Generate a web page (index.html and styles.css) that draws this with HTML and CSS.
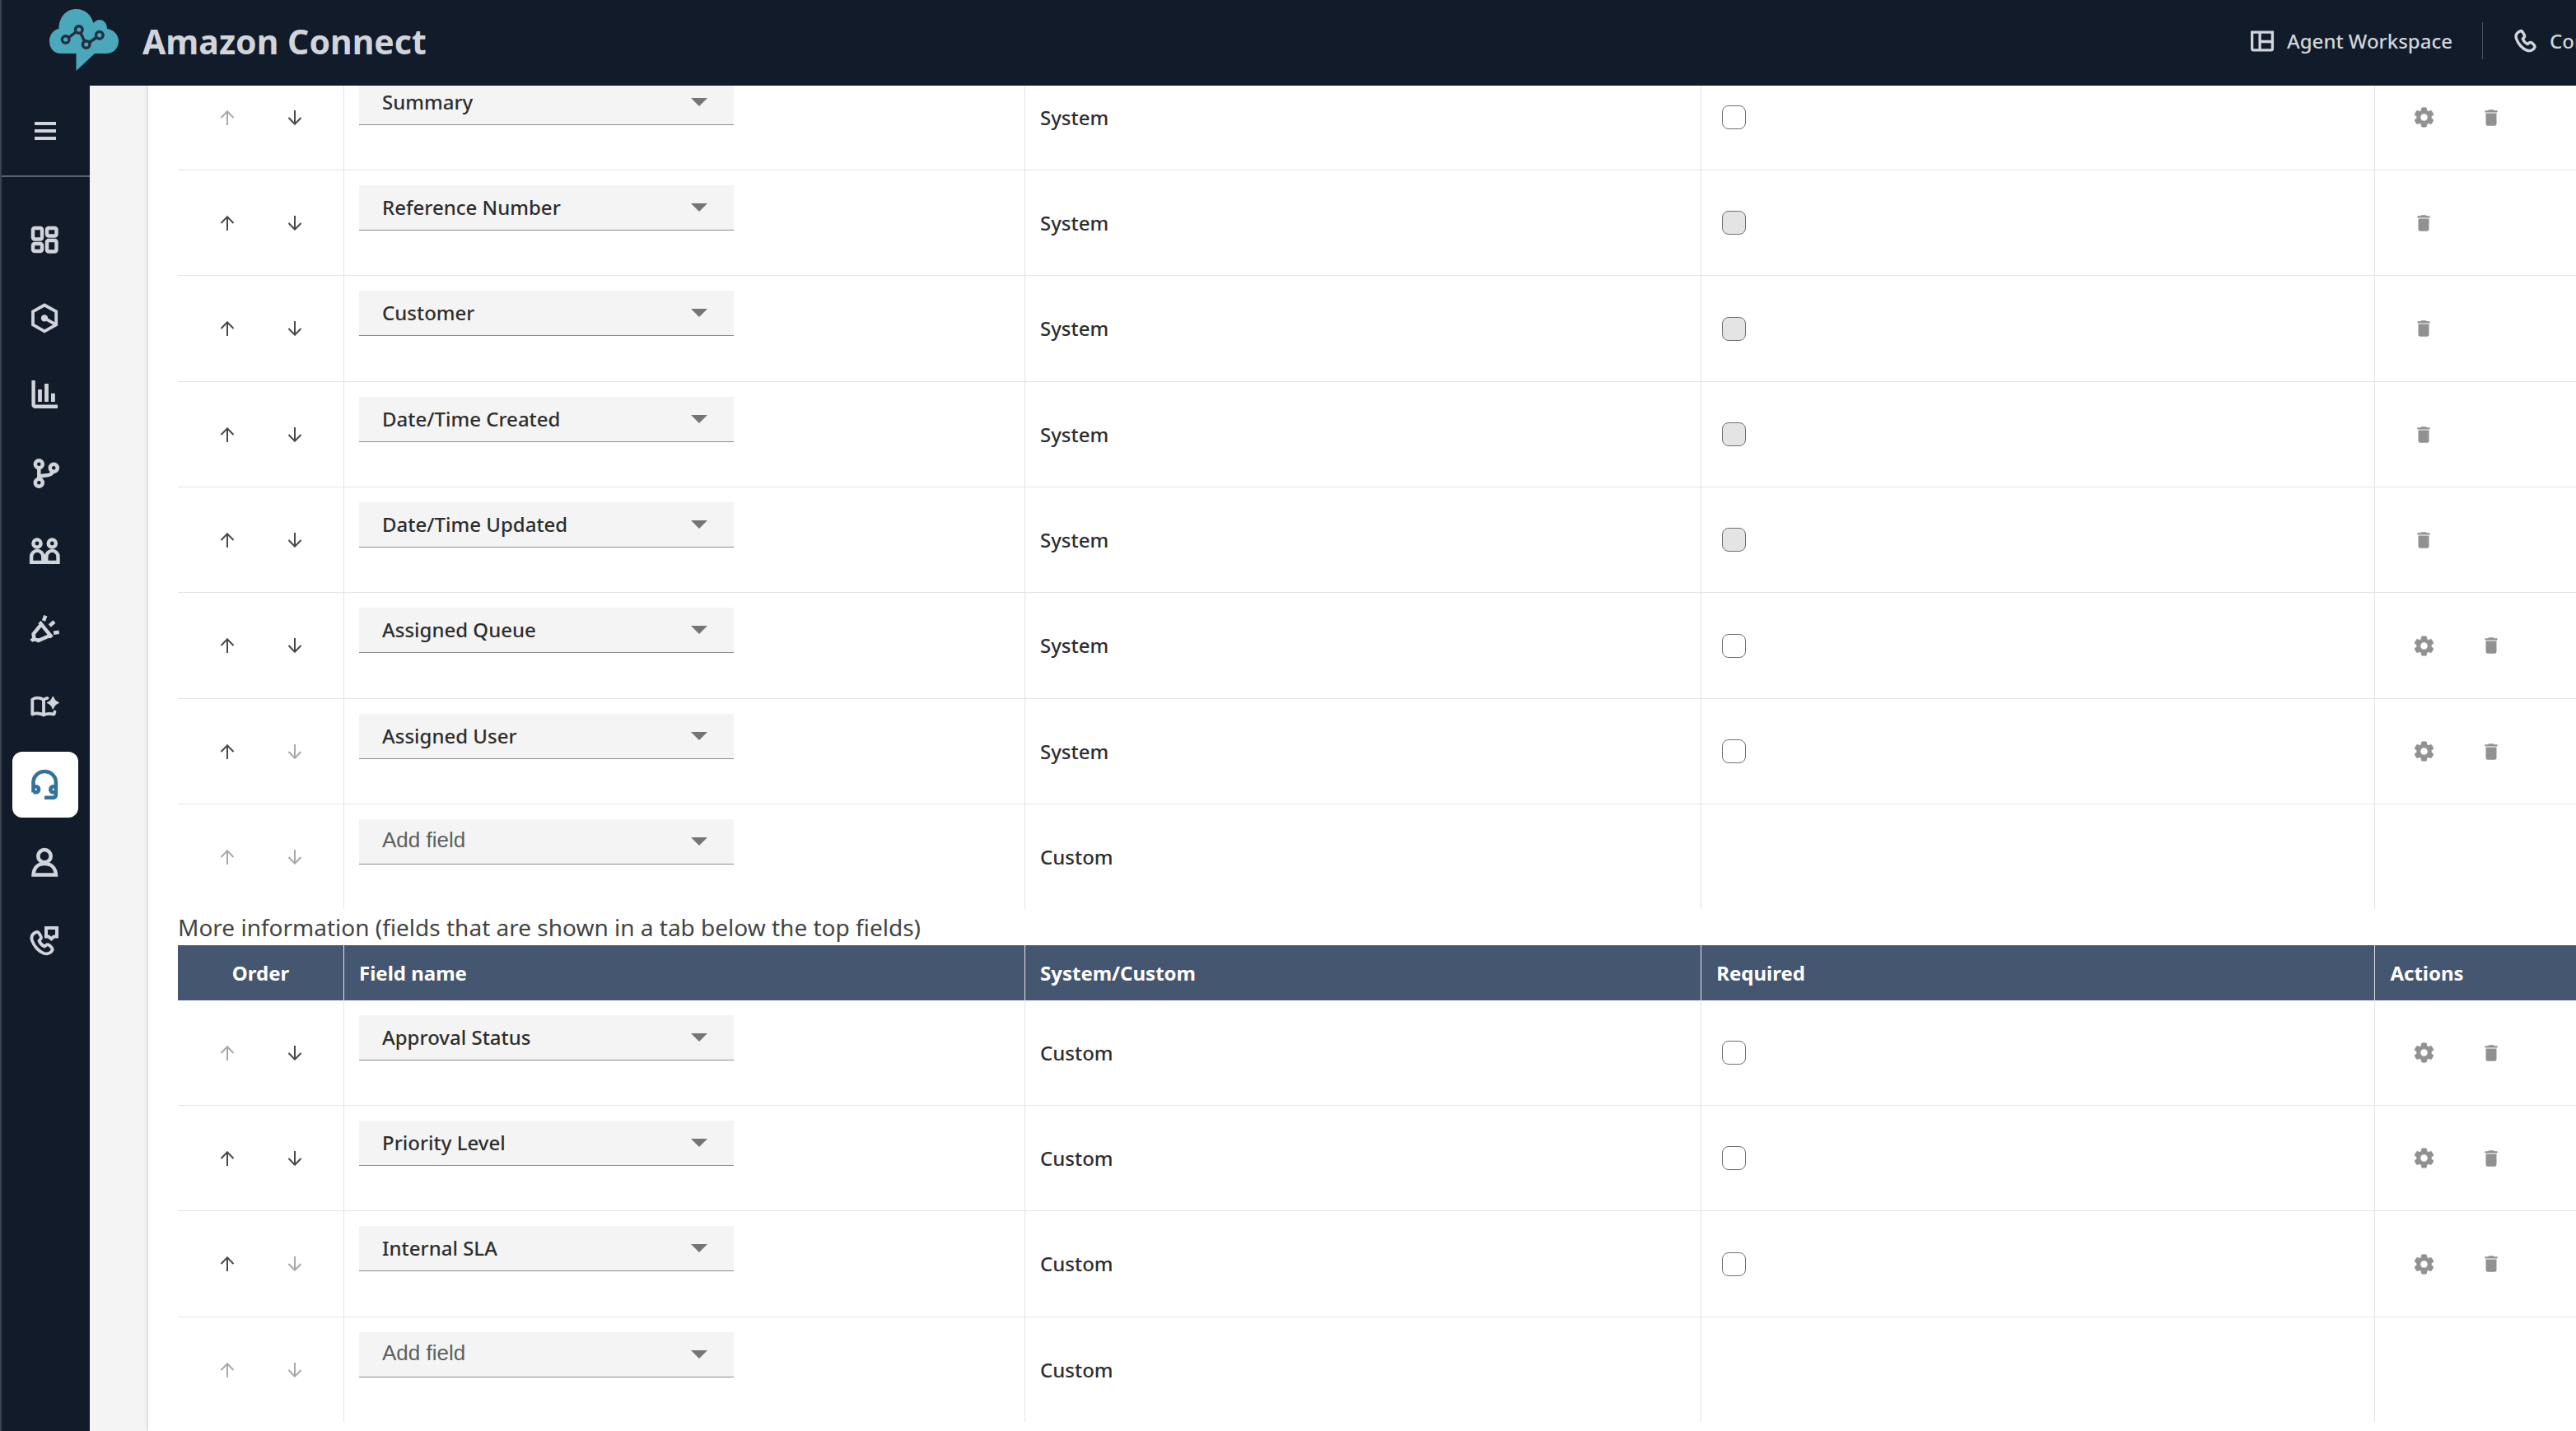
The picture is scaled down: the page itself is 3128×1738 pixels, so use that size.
FILE: index.html
```html
<!DOCTYPE html>
<html lang="en">
<head>
<meta charset="utf-8">
<title>Amazon Connect</title>
<link rel="stylesheet" href="styles.css">
</head>
<body>
<svg class="sprite" aria-hidden="true">
  <symbol id="up" viewBox="0 0 18 18"><path d="M9 18V2M1.500 9L9 1.300L16.500 9" fill="none" stroke="currentColor" stroke-width="2"/></symbol>
  <symbol id="down" viewBox="0 0 18 18"><path d="M9 0V16M1.500 9L9 16.700L16.500 9" fill="none" stroke="currentColor" stroke-width="2"/></symbol>
  <symbol id="caret" viewBox="0 0 20 10"><path d="M0 0H20L10 10Z" fill="currentColor"/></symbol>
  <symbol id="gear" viewBox="0 0 24 24"><path fill="currentColor" stroke="currentColor" stroke-width=".8" d="M19.140 12.940c.04-.3.06-.61.06-.94 0-.32-.02-.64-.07-.94l2.030-1.580c.18-.14.23-.41.12-.61l-1.920-3.320c-.12-.22-.37-.29-.59-.22l-2.390.96c-.5-.38-1.030-.7-1.620-.94l-.36-2.540c-.04-.24-.24-.41-.48-.41h-3.840c-.24 0-.43.17-.47.41l-.36 2.540c-.59.24-1.130.57-1.620.94l-2.390-.96c-.22-.08-.47 0-.59.22L2.740 8.870c-.12.21-.08.47.12.61l2.030 1.580c-.05.3-.09.63-.09.94s.02.64.07.94l-2.030 1.580c-.18.14-.23.41-.12.61l1.920 3.320c.12.22.37.29.59.22l2.390-.96c.5.38 1.030.7 1.620.94l.36 2.540c.05.24.24.41.48.41h3.840c.24 0 .44-.17.47-.41l.36-2.540c.59-.24 1.130-.56 1.620-.94l2.390.96c.22.08.47 0 .59-.22l1.920-3.320c.12-.22.07-.47-.12-.61l-2.010-1.580zM12 15.900c-2.150 0-3.900-1.750-3.900-3.900s1.750-3.900 3.900-3.900 3.900 1.750 3.900 3.900-1.750 3.900-3.900 3.900z"/></symbol>
  <symbol id="trash" viewBox="0 0 24 24"><path fill="currentColor" d="M6 19c0 1.100.9 2 2 2h8c1.100 0 2-.9 2-2V7H6v12zM19 4h-3.500l-1-1h-5l-1 1H5v2h14V4z"/></symbol>
  <symbol id="handset" viewBox="0 7 32 32"><path fill="none" stroke="currentColor" stroke-width="3.800" stroke-linejoin="round" d="M8 10.500c-4 2-5.500 5.500-4 10c2.500 7 8.500 13.500 14.500 15.500c4 1 8-.5 9.700-3.500c.8-1.500.3-3-.9-4.200l-2-2c-1.400-1.300-3-1.300-4.300-.3l-2 1.500c-3-1.300-5.400-4-6.500-7l1.500-1.600c1.300-1.300 1.200-2.600.4-4l-2-3.500c-1-1.600-2.800-1.800-4.400-.9Z"/></symbol>
</svg>

<header class="topbar">
  <a class="brand" href="#">
    <svg class="logo" viewBox="0 0 84 75" aria-hidden="true">
      <path fill="#4ba7ba" d="M11.500 24C11.500 10 20 0 32.500 0C43 0 51 7 53.500 17C55 15 58 13 61 13C66 13 70 17 70 24C78 25 84 31 84 39C84 48 77 54 69 54H55L32.500 75V54H14C6 54 0 48 0 39C0 31 5 25 11.500 24Z"/>
      <g fill="none" stroke="#232f3e" stroke-width="3.400">
        <path d="M23.500 34.500L32 28M38 29L42.500 39M48.500 40.500L57 34.500"/>
        <circle cx="19.700" cy="37" r="4.300"/><circle cx="35.800" cy="25" r="4.300"/><circle cx="44.700" cy="43" r="4.300"/><circle cx="60.800" cy="31.700" r="4.300"/>
      </g>
    </svg>
    <span class="brand-name">Amazon Connect</span>
  </a>
  <nav class="top-links" aria-label="Tools">
    <a class="top-link" href="#">
      <svg class="icon-workspace" viewBox="0 0 30 26" aria-hidden="true"><path fill="none" stroke="currentColor" stroke-width="3.400" d="M1.700 1.700H27.300V22.300a2 2 0 0 1-2 2H3.700a2 2 0 0 1-2-2ZM11.500 2V24M12 13.500H27"/></svg>
      Agent Workspace
    </a>
    <a class="top-link top-link-divided" href="#">
      <svg class="icon-call" aria-hidden="true"><use href="#handset"/></svg>
      Contact Control Panel
    </a>
  </nav>
</header>

<div class="shell">
  <aside class="rail">
    <button class="menu-toggle" aria-label="Menu"><svg class="icon-menu" viewBox="0 0 26 24" aria-hidden="true"><path stroke="currentColor" stroke-width="4" d="M0 3H26M0 12H26M0 21H26"/></svg></button>
    <nav class="rail-nav" aria-label="Main">
      <a class="rail-link" href="#" aria-label="Dashboard"><svg viewBox="0 0 40 40"><g stroke-width="4.400"><rect x="5" y="6" width="11" height="13.500" rx="2"/><rect x="22" y="6" width="11.500" height="9.500" rx="2"/><rect x="5" y="25" width="11" height="9" rx="2"/><rect x="22" y="21" width="11.500" height="13.500" rx="2"/></g></svg></a>
      <a class="rail-link" href="#" aria-label="Routing"><svg viewBox="0 0 40 40"><path stroke-width="3.800" d="M19 4.500L33.200 12.300V28.300L19 36.300L5 28.300V12.300ZM19 20.400L33 28.300"/><circle cx="19" cy="20.400" r="4.200" fill="currentColor" stroke="none"/></svg></a>
      <a class="rail-link" href="#" aria-label="Analytics"><svg viewBox="0 0 40 40"><path stroke-width="4.400" d="M5.600 2V31.600a2.200 2.200 0 0 0 2.200 2.200H35"/><path stroke-width="4.800" d="M13.500 13V28M21.500 6V28M29.400 17.700V28"/></svg></a>
      <a class="rail-link" href="#" aria-label="Flows"><svg viewBox="0 0 40 40"><g stroke-width="4.500"><circle cx="12.300" cy="8.700" r="4.500"/><circle cx="12.300" cy="31.300" r="4.500"/><circle cx="30.300" cy="13.300" r="4.500"/><path d="M12.300 13V27C12.300 22 18 22.700 22 22.300S28.500 20 29.500 17.500"/></g></svg></a>
      <a class="rail-link" href="#" aria-label="Users"><svg viewBox="0 0 40 40"><g stroke-width="4.400"><circle cx="10" cy="11" r="4.600"/><circle cx="28.300" cy="11" r="4.600"/><path d="M3.100 33.900V27a7 7 0 0 1 14.200 0V33.900ZM21.300 33.900V27a7 7 0 0 1 14.200 0V33.900Z"/></g></svg></a>
      <a class="rail-link" href="#" aria-label="Campaigns"><svg viewBox="0 0 40 40"><path stroke-width="4.400" d="M13 11.500L28 30M15 14.500L5.500 26L6.500 31.500L11.500 34L26 27.700M6.500 31L3 34.500M20.300 3.700L18 10M31 11L25.300 16M36.700 23.700L30 24.700"/></svg></a>
      <a class="rail-link" href="#" aria-label="Knowledge"><svg viewBox="0 0 40 40"><path stroke-width="3.800" stroke-linejoin="round" stroke-linecap="round" d="M18 30.500V12C14 9 8 9 4.300 11.500V29.500C8 28 14 28 18 30.500C22 28 26 28.500 30.500 29.500L31.500 26.500M18 12C19.500 10.500 21 10 22.500 9.800"/><path fill="currentColor" stroke-width="1.600" stroke-linejoin="round" d="M29.300 8.500Q30.800 13.800 36 15.500Q30.800 17.200 29.300 22.500Q27.800 17.200 22.700 15.500Q27.800 13.800 29.300 8.500Z"/></svg></a>
      <a class="rail-link rail-link-active" href="#" aria-label="Agent applications" aria-current="page"><svg viewBox="0 0 40 40"><path stroke-width="4.600" d="M5.500 29.500V17a13.700 13 0 0 1 27.400 0V32.500a3.300 3.300 0 0 1-3.300 3.300H19M5.500 22.300H9a3 3 0 0 1 3 3v1a3 3 0 0 1-3 3H5.500M32.900 22.300H29.400a3 3 0 0 0-3 3v1a3 3 0 0 0 3 3H32.900"/></svg></a>
      <a class="rail-link" href="#" aria-label="Customer profiles"><svg viewBox="0 0 40 40"><g stroke-width="4.600"><circle cx="19" cy="12.700" r="7.700"/><path d="M5.600 35.500C6 27 11 22 19 22S32.500 27 32.900 35.500Z"/></g></svg></a>
      <a class="rail-link" href="#" aria-label="Channels"><svg viewBox="0 0 40 40"><path stroke-width="4" d="M21 5H34V15.500H30.500L27.300 18.300L24 15.500H21Z"/><use href="#handset" x="0" y="7" width="32" height="32"/></svg></a>
    </nav>
  </aside>

  <main class="content">
    <div class="card">
      <table class="fields fields-scrolled" aria-label="Top fields">
        <colgroup><col class="col-order"><col class="col-name"><col class="col-type"><col class="col-required"><col></colgroup>
        <tbody>
          <tr>
            <td><div class="order"><button aria-label="Move up" disabled><svg><use href="#up"/></svg></button><button aria-label="Move down"><svg><use href="#down"/></svg></button></div></td>
            <td><div class="picker"><select aria-label="Field"><option>Summary</option></select><svg><use href="#caret"/></svg></div></td>
            <td>System</td><td><input type="checkbox" aria-label="Required"></td>
            <td><div class="actions"><button aria-label="Settings"><svg class="gear"><use href="#gear"/></svg></button><button aria-label="Delete"><svg class="trash"><use href="#trash"/></svg></button></div></td>
          </tr>
          <tr>
            <td><div class="order"><button aria-label="Move up"><svg><use href="#up"/></svg></button><button aria-label="Move down"><svg><use href="#down"/></svg></button></div></td>
            <td><div class="picker"><select aria-label="Field"><option>Reference Number</option></select><svg><use href="#caret"/></svg></div></td>
            <td>System</td><td><input type="checkbox" aria-label="Required" disabled></td>
            <td><div class="actions"><button aria-label="Delete"><svg class="trash"><use href="#trash"/></svg></button></div></td>
          </tr>
          <tr>
            <td><div class="order"><button aria-label="Move up"><svg><use href="#up"/></svg></button><button aria-label="Move down"><svg><use href="#down"/></svg></button></div></td>
            <td><div class="picker"><select aria-label="Field"><option>Customer</option></select><svg><use href="#caret"/></svg></div></td>
            <td>System</td><td><input type="checkbox" aria-label="Required" disabled></td>
            <td><div class="actions"><button aria-label="Delete"><svg class="trash"><use href="#trash"/></svg></button></div></td>
          </tr>
          <tr>
            <td><div class="order"><button aria-label="Move up"><svg><use href="#up"/></svg></button><button aria-label="Move down"><svg><use href="#down"/></svg></button></div></td>
            <td><div class="picker"><select aria-label="Field"><option>Date/Time Created</option></select><svg><use href="#caret"/></svg></div></td>
            <td>System</td><td><input type="checkbox" aria-label="Required" disabled></td>
            <td><div class="actions"><button aria-label="Delete"><svg class="trash"><use href="#trash"/></svg></button></div></td>
          </tr>
          <tr>
            <td><div class="order"><button aria-label="Move up"><svg><use href="#up"/></svg></button><button aria-label="Move down"><svg><use href="#down"/></svg></button></div></td>
            <td><div class="picker"><select aria-label="Field"><option>Date/Time Updated</option></select><svg><use href="#caret"/></svg></div></td>
            <td>System</td><td><input type="checkbox" aria-label="Required" disabled></td>
            <td><div class="actions"><button aria-label="Delete"><svg class="trash"><use href="#trash"/></svg></button></div></td>
          </tr>
          <tr>
            <td><div class="order"><button aria-label="Move up"><svg><use href="#up"/></svg></button><button aria-label="Move down"><svg><use href="#down"/></svg></button></div></td>
            <td><div class="picker"><select aria-label="Field"><option>Assigned Queue</option></select><svg><use href="#caret"/></svg></div></td>
            <td>System</td><td><input type="checkbox" aria-label="Required"></td>
            <td><div class="actions"><button aria-label="Settings"><svg class="gear"><use href="#gear"/></svg></button><button aria-label="Delete"><svg class="trash"><use href="#trash"/></svg></button></div></td>
          </tr>
          <tr>
            <td><div class="order"><button aria-label="Move up"><svg><use href="#up"/></svg></button><button aria-label="Move down" disabled><svg><use href="#down"/></svg></button></div></td>
            <td><div class="picker"><select aria-label="Field"><option>Assigned User</option></select><svg><use href="#caret"/></svg></div></td>
            <td>System</td><td><input type="checkbox" aria-label="Required"></td>
            <td><div class="actions"><button aria-label="Settings"><svg class="gear"><use href="#gear"/></svg></button><button aria-label="Delete"><svg class="trash"><use href="#trash"/></svg></button></div></td>
          </tr>
          <tr>
            <td><div class="order"><button aria-label="Move up" disabled><svg><use href="#up"/></svg></button><button aria-label="Move down" disabled><svg><use href="#down"/></svg></button></div></td>
            <td><div class="picker picker-empty"><select aria-label="Field"><option>Add field</option></select><svg><use href="#caret"/></svg></div></td>
            <td>Custom</td><td></td><td></td>
          </tr>
        </tbody>
      </table>

      <h2 class="section-title">More information (fields that are shown in a tab below the top fields)</h2>
      <table class="fields" aria-label="More information fields">
        <colgroup><col class="col-order"><col class="col-name"><col class="col-type"><col class="col-required"><col></colgroup>
        <thead>
          <tr><th scope="col">Order</th><th scope="col">Field name</th><th scope="col">System/Custom</th><th scope="col">Required</th><th scope="col">Actions</th></tr>
        </thead>
        <tbody>
          <tr>
            <td><div class="order"><button aria-label="Move up" disabled><svg><use href="#up"/></svg></button><button aria-label="Move down"><svg><use href="#down"/></svg></button></div></td>
            <td><div class="picker"><select aria-label="Field"><option>Approval Status</option></select><svg><use href="#caret"/></svg></div></td>
            <td>Custom</td><td><input type="checkbox" aria-label="Required"></td>
            <td><div class="actions"><button aria-label="Settings"><svg class="gear"><use href="#gear"/></svg></button><button aria-label="Delete"><svg class="trash"><use href="#trash"/></svg></button></div></td>
          </tr>
          <tr>
            <td><div class="order"><button aria-label="Move up"><svg><use href="#up"/></svg></button><button aria-label="Move down"><svg><use href="#down"/></svg></button></div></td>
            <td><div class="picker"><select aria-label="Field"><option>Priority Level</option></select><svg><use href="#caret"/></svg></div></td>
            <td>Custom</td><td><input type="checkbox" aria-label="Required"></td>
            <td><div class="actions"><button aria-label="Settings"><svg class="gear"><use href="#gear"/></svg></button><button aria-label="Delete"><svg class="trash"><use href="#trash"/></svg></button></div></td>
          </tr>
          <tr>
            <td><div class="order"><button aria-label="Move up"><svg><use href="#up"/></svg></button><button aria-label="Move down" disabled><svg><use href="#down"/></svg></button></div></td>
            <td><div class="picker"><select aria-label="Field"><option>Internal SLA</option></select><svg><use href="#caret"/></svg></div></td>
            <td>Custom</td><td><input type="checkbox" aria-label="Required"></td>
            <td><div class="actions"><button aria-label="Settings"><svg class="gear"><use href="#gear"/></svg></button><button aria-label="Delete"><svg class="trash"><use href="#trash"/></svg></button></div></td>
          </tr>
          <tr>
            <td><div class="order"><button aria-label="Move up" disabled><svg><use href="#up"/></svg></button><button aria-label="Move down" disabled><svg><use href="#down"/></svg></button></div></td>
            <td><div class="picker picker-empty"><select aria-label="Field"><option>Add field</option></select><svg><use href="#caret"/></svg></div></td>
            <td>Custom</td><td></td><td></td>
          </tr>
        </tbody>
      </table>
    </div>
  </main>
</div>
</body>
</html>
```
FILE: styles.css
```css
*, *::before, *::after { box-sizing: border-box; }

body {
  margin: 0;
  height: 100vh;
  overflow: hidden;
  display: flex;
  flex-direction: column;
  background: #fff;
  color: #2e2e2e;
  font: 500 24px/32px "Noto Sans", "Open Sans", sans-serif;
}

.sprite { display: none; }
svg { display: block; flex: none; }
a { color: inherit; text-decoration: none; }
button {
  padding: 0;
  border: 0;
  background: none;
  color: inherit;
  font: inherit;
}

/* Top bar */
.topbar {
  flex: none;
  height: 104px;
  display: flex;
  justify-content: space-between;
  background: #121b29;
  border-left: 2px solid #3a444f;
  color: #d1d5db;
}
.brand {
  display: flex;
  gap: 29px;
  padding: 11px 0 0 58px;
}
.logo { width: 84px; height: 75px; }
.brand-name {
  font-size: 41px;
  font-weight: 700;
  line-height: 78px;
}
.top-links {
  flex: 0 0 395px;
  display: flex;
  align-items: center;
  overflow: hidden;
  white-space: nowrap;
}
.top-link {
  flex: none;
  display: flex;
  align-items: center;
  gap: 15px;
  height: 45px;
  margin-bottom: 5px;
}
.top-link-divided {
  margin-left: 36px;
  padding-left: 37px;
  border-left: 1px solid #4a5462;
}
.icon-workspace { width: 29px; height: 26px; }
.icon-call { width: 29px; height: 29px; }

/* Side rail */
.shell {
  flex: 1;
  min-height: 0;
  display: flex;
}
.rail {
  flex: 0 0 109px;
  background: #121b29;
  border-left: 2px solid #3a444f;
  color: #d1d5db;
}
.menu-toggle {
  display: flex;
  justify-content: center;
  align-items: center;
  width: 100%;
  height: 111px;
  padding-right: 2px;
  border-bottom: 2px solid #59616c;
}
.icon-menu { width: 26px; height: 24px; }
.rail-nav {
  height: 967px;
  padding: 36px 14px 0 13px;
  display: flex;
  flex-direction: column;
  justify-content: space-between;
}
.rail-link {
  display: flex;
  justify-content: center;
  align-items: center;
  width: 80px;
  height: 80px;
  border-radius: 12px;
}
.rail-link-active { background: #fff; color: #33739b; }
.rail-link svg {
  width: 40px;
  height: 40px;
  fill: none;
  stroke: currentColor;
}

/* Content */
.content {
  flex: 1;
  min-width: 0;
  padding-left: 71px;
  overflow: hidden;
  background: #f4f4f4;
}
.card {
  display: flow-root;
  min-height: 100%;
  padding-left: 36px;
  background: #fff;
  box-shadow: 0 0 4px rgba(0, 0, 0, .25);
}
.section-title {
  margin: 0;
  color: #444;
  font-size: 28px;
  font-weight: 400;
  line-height: 44px;
}

.fields {
  width: 100%;
  table-layout: fixed;
  border-collapse: separate;
  border-spacing: 0;
}
/* The list opens part-way down its first row. */
.fields-scrolled { margin-top: -25px; }
.col-order { width: 202px; }
.col-name { width: 28.4%; }
.col-type { width: 28.2%; }
.col-required { width: 28.1%; }

.fields th {
  height: 67px;
  padding: 0 18px;
  background: #455670;
  color: #fff;
  font-weight: 700;
  text-align: left;
}
.fields th:first-child { text-align: center; }
.fields td {
  height: 128px;
  padding: 0 18px;
  border-bottom: 1px solid #e4e4e4;
}
.fields tr:nth-child(3n) td { height: 129px; }
.fields tr:last-child td { height: 127px; border-bottom: 0; }
.fields tr > :not(:last-child) { border-right: 1px solid #e4e4e4; }
.fields td:nth-child(2) { padding-top: 18px; vertical-align: top; }

.order, .actions { display: flex; }
.order {
  justify-content: center;
  margin: 0 -8px;
  color: #484848;
}
.actions { color: #919191; }
.order button, .actions button {
  width: 82px;
  height: 48px;
  display: flex;
  justify-content: center;
  align-items: center;
}
.order button:disabled { color: #a8a8a8; }
.order svg { width: 18px; height: 18px; }
.gear { width: 29px; height: 29px; }
.trash { width: 26px; height: 26px; }

.picker {
  width: 455px;
  height: 55px;
  display: grid;
  align-items: center;
  background: #f4f4f4;
  border-bottom: 1px solid #8c8c8c;
}
.picker select {
  grid-area: 1 / 1;
  appearance: none;
  height: 54px;
  padding: 0 80px 0 28px;
  border: 0;
  background: none;
  color: #2e2e2e;
  font: inherit;
}
.picker svg {
  grid-area: 1 / 1;
  justify-self: end;
  width: 20px;
  height: 10px;
  margin-right: 32px;
  color: #757575;
  pointer-events: none;
}
.picker .picker-empty select { padding-left: 29px; }
.picker-empty select {
  padding-bottom: 5px;
  color: #606060;
  font: 26px "Liberation Sans", sans-serif;
}

.fields input {
  appearance: none;
  display: block;
  width: 29px;
  height: 29px;
  margin: 0 0 0 7px;
  border: 1px solid #6e6e6e;
  border-radius: 8px;
  background: #fff;
}
.fields input:disabled { background: #e4e4e4; }
```
